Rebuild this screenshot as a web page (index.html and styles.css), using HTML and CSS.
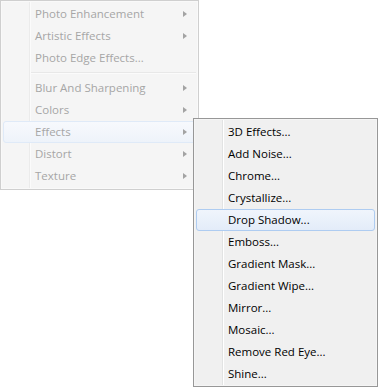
FILE: index.html
```html
<!DOCTYPE html>
<html lang="en">
<head>
    <meta charset="UTF-8">
    <meta name="viewport" content="width=device-width, initial-scale=1.0">
    <title>Effects Menu</title>
    <link rel="stylesheet" href="styles.css">
</head>
<body>
    <div class="menu main-menu">
        <div class="menu-item has-sub">Photo Enhancement</div>
        <div class="menu-item has-sub">Artistic Effects</div>
        <div class="menu-item">Photo Edge Effects...</div>
        <div class="separator"></div>
        <div class="menu-item has-sub">Blur And Sharpening</div>
        <div class="menu-item has-sub">Colors</div>
        <div class="menu-item has-sub active">Effects</div>
        <div class="menu-item has-sub">Distort</div>
        <div class="menu-item has-sub">Texture</div>
    </div>
    <div class="menu sub-menu">
        <div class="menu-item">3D Effects...</div>
        <div class="menu-item">Add Noise...</div>
        <div class="menu-item">Chrome...</div>
        <div class="menu-item">Crystallize...</div>
        <div class="menu-item hover">Drop Shadow...</div>
        <div class="menu-item">Emboss...</div>
        <div class="menu-item">Gradient Mask...</div>
        <div class="menu-item">Gradient Wipe...</div>
        <div class="menu-item">Mirror...</div>
        <div class="menu-item">Mosaic...</div>
        <div class="menu-item">Remove Red Eye...</div>
        <div class="menu-item">Shine...</div>
    </div>
</body>
</html>
```

FILE: styles.css
```css
body {
    margin: 0;
    height: 388px;
    background: #fff;
    font-family: "Open Sans", "Noto Sans", sans-serif;
    font-size: 11.5px;
    position: relative;
}

.menu {
    box-sizing: border-box;
    padding: 2px;
    border: 1px solid #979797;
    background:
        linear-gradient(to right, transparent 28px, #e2e3e3 28px, #e2e3e3 29px, #fff 29px, #fff 30px, transparent 30px),
        #f0f0f0;
    box-shadow: inset 0 0 0 1px #f5f5f5;
}

.menu-item {
    position: relative;
    height: 22px;
    line-height: 22px;
    padding-left: 32px;
    white-space: nowrap;
    border-radius: 3px;
    color: #000;
}

.has-sub::after {
    content: "";
    position: absolute;
    right: 9px;
    top: 8px;
    border-left: 4px solid #a3a3a3;
    border-top: 3.5px solid transparent;
    border-bottom: 3.5px solid transparent;
}

.separator {
    height: 8px;
    margin-left: 28px;
    background: linear-gradient(to bottom, transparent 3px, #e2e3e3 3px, #e2e3e3 4px, #fff 4px, #fff 5px, transparent 5px);
}

/* parent menu is inactive, everything faded */
.main-menu {
    width: 199px;
    height: 190px;
    border-color: #cfcfcf;
    background:
        linear-gradient(to right, transparent 28px, #ebebeb 28px, #ebebeb 29px, #fbfbfb 29px, #fbfbfb 30px, transparent 30px),
        #f5f5f5;
    box-shadow: inset 0 0 0 1px #f9f9f9;
}

.main-menu .menu-item {
    color: #a6a6a6;
}

.main-menu .separator {
    background: linear-gradient(to bottom, transparent 3px, #e8e8e8 3px, #e8e8e8 4px, #fbfbfb 4px, #fbfbfb 5px, transparent 5px);
}

.menu-item.active {
    box-sizing: border-box;
    border: 1px solid #dfeaf8;
    padding-left: 31px;
    line-height: 20px;
    background: linear-gradient(to bottom, #f7f9fd, #eef3fa);
}

.menu-item.active::after {
    right: 8px;
    top: 7px;
}

.sub-menu {
    position: absolute;
    left: 193px;
    top: 118px;
    width: 185px;
    height: 269px;
}

.menu-item.hover {
    box-sizing: border-box;
    border: 1px solid #aeccf1;
    padding-left: 31px;
    line-height: 20px;
    background: linear-gradient(to bottom, #f0f5fc, #e3ecf9);
}
```
